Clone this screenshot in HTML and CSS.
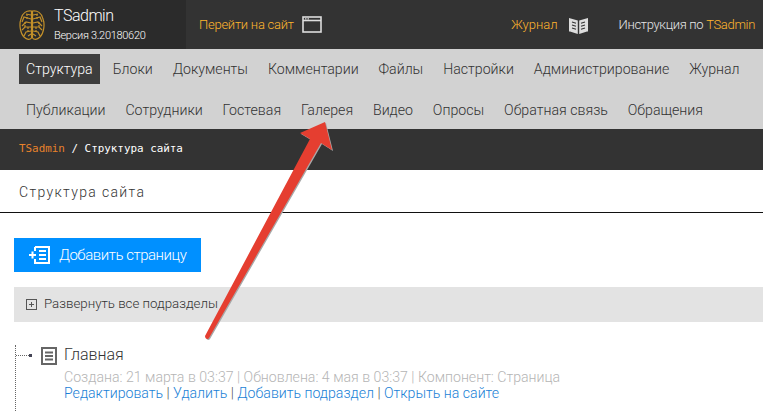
FILE: index.html
```html
<!DOCTYPE html>
<html>
<head>
    <title>TSadmin</title>
    <link rel="stylesheet" href="styles.css">
</head>
<body>
    <div class="topbar">
        <div class="logo">
            <svg class="brain" width="26" height="32" viewBox="0 0 26 32" fill="none" stroke="#c2902a" stroke-width="1.2">
                <path d="M12.5 2C8 1 3 4 2 10C0 15 1 24 5 28C8 31 11 31 12.5 29Z"/>
                <path d="M13.5 2C18 1 23 4 24 10C26 15 25 24 21 28C18 31 15 31 13.5 29Z"/>
                <path d="M12 6L7 5M12 10L5 8L3 13M12 14L7 13L3 17M12 18L6 18L3 21M12 22L7 23L5 27M9 27L12 25"/>
                <path d="M14 6L19 5M14 10L21 8L23 13M14 14L19 13L23 17M14 18L20 18L23 21M14 22L19 23L21 27M17 27L14 25"/>
                <path d="M8 5V10M18 5V10M6 13V18M20 13V18M9 18V23M17 18V23" stroke-dasharray="2 1"/>
            </svg>
            <div>
                <div class="logo-name">TSadmin</div>
                <div class="logo-version">Версия 3.20180620</div>
            </div>
        </div>
        <a class="site-link">Перейти на сайт
            <svg width="20" height="17" viewBox="0 0 20 17" fill="none" stroke="#ddd" stroke-width="1.6">
                <rect x="1" y="1" width="18" height="15"/>
                <path d="M1 4.5H19"/>
                <path d="M3 2.8H8" stroke-dasharray="1.5 1" stroke-width="1.2"/>
            </svg>
        </a>
        <div class="top-right">
            <a class="journal">Журнал
                <svg width="19" height="18" viewBox="0 0 19 18" fill="#ddd">
                    <path d="M0 2L8.8 4.5V18L1 15.5H0ZM19 2L10.2 4.5V18L18 15.5H19Z"/>
                    <path d="M3 6L7 7.2M3 9L7 10.2M3 12L7 13.2M16 6L12 7.2M16 9L12 10.2M16 12L12 13.2" stroke="#333" stroke-width="1.2"/>
                </svg>
            </a>
            <a class="manual">Инструкция по <span>TSadmin</span></a>
        </div>
    </div>

    <div class="nav">
        <div class="nav-row">
            <a class="active">Структура</a>
            <a>Блоки</a>
            <a>Документы</a>
            <a>Комментарии</a>
            <a>Файлы</a>
            <a>Настройки</a>
            <a>Администрирование</a>
            <a>Журнал</a>
        </div>
        <div class="nav-row">
            <a>Публикации</a>
            <a>Сотрудники</a>
            <a>Гостевая</a>
            <a>Галерея</a>
            <a>Видео</a>
            <a>Опросы</a>
            <a>Обратная связь</a>
            <a>Обращения</a>
        </div>
    </div>

    <div class="crumbs"><span>TSadmin</span> / Структура сайта</div>

    <h1 class="title">Структура сайта</h1>

    <div class="content">
        <a class="add-btn">
            <svg width="21" height="18" viewBox="0 0 21 18" fill="none" stroke="#fff" stroke-width="2">
                <path d="M6 1H20V17H6V13M6 5V1"/>
                <path d="M0 9H7M3.5 5.5V12.5M10 5H17M10 9H17M10 13H17"/>
            </svg>
            Добавить страницу
        </a>

        <div class="expand">
            <span class="plus"></span>
            <span class="expand-text">Развернуть все подразделы</span>
        </div>

        <div class="tree">
            <div class="tree-head">
                <span class="tree-dot"></span>
                <svg width="16" height="18" viewBox="0 0 16 18" fill="none" stroke="#666" stroke-width="2">
                    <rect x="1" y="1" width="14" height="16"/>
                    <path d="M4 5.5H12M4 9H12M4 12.5H12"/>
                </svg>
                <span class="tree-name">Главная</span>
            </div>
            <div class="tree-meta">Создана: 21 марта в 03:37 | Обновлена: 4 мая в 03:37 | Компонент: Страница</div>
            <div class="tree-links"><a>Редактировать</a> | <a>Удалить</a> | <a>Добавить подраздел</a> | <a>Открыть на сайте</a></div>
        </div>
    </div>

    <svg class="arrow" width="763" height="412" viewBox="0 0 763 412">
        <path d="M325 122L300 133L310 139L205 336C205 339 208 340 209 338L321 143L332 150Z" fill="#a8a8a8" transform="translate(1 1)"/>
        <path d="M325 122L300 133L310 139L205 336C205 339 208 340 209 338L321 143L332 150Z" fill="#e53e30"/>
    </svg>
</body>
</html>
```

FILE: styles.css
```css
html, body {
    margin: 0;
    height: 412px;
    overflow: hidden;
}

body {
    font-family: Roboto, 'Liberation Sans', sans-serif;
    font-weight: 300;
    background: white;
    color: #333;
    position: relative;
}

a {
    text-decoration: none;
}

.topbar {
    height: 49px;
    background: #333;
    display: flex;
    align-items: center;
    color: white;
}

.logo {
    width: 186px;
    height: 49px;
    background: #2b2b2b;
    display: flex;
    align-items: center;
    box-sizing: border-box;
    padding-left: 19px;
    gap: 9px;
}

.logo-name {
    font-size: 16px;
    line-height: 20px;
    margin-bottom: 3px;
    letter-spacing: -0.5px;
}

.logo-version {
    font-size: 11px;
    line-height: 14px;
    letter-spacing: -0.3px;
}

.site-link {
    margin-left: 13px;
    color: #ffb52e;
    font-size: 13px;
    letter-spacing: -0.25px;
    display: flex;
    align-items: center;
    gap: 8px;
}

.top-right {
    margin-left: auto;
    padding-right: 8px;
    display: flex;
    align-items: center;
    gap: 31px;
    font-size: 13px;
}

.journal {
    color: #ffb52e;
    display: flex;
    align-items: center;
    gap: 11px;
}

.manual {
    color: #e6e6e6;
    letter-spacing: -0.33px;
}

.manual span {
    color: #ffb52e;
}

.nav {
    height: 80px;
    background: #d2d2d2;
    box-sizing: border-box;
    padding: 5px 0 0 19px;
    font-size: 14.15px;
}

.nav-row {
    height: 30px;
    display: flex;
    align-items: center;
    gap: 6px;
}

.nav-row + .nav-row {
    margin-top: 11px;
    gap: 19.8px;
    padding-left: 7px;
    font-size: 14.2px;
}

.nav-row a {
    color: #333;
    height: 30px;
    box-sizing: border-box;
    line-height: 31px;
    padding: 0 7px;
}

.nav-row + .nav-row a {
    padding: 0;
    line-height: 30px;
}

.nav-row a.active {
    background: #3d3d3d;
    color: white;
}

.crumbs {
    height: 41px;
    background: #333;
    box-sizing: border-box;
    padding: 12px 0 0 19px;
    color: white;
    font-family: 'DejaVu Sans Mono', monospace;
    font-size: 10.9px;
    font-weight: 400;
    line-height: 15px;
}

.crumbs span {
    color: #e8822b;
}

.title {
    margin: 0;
    height: 43px;
    box-sizing: border-box;
    padding: 13px 0 0 19px;
    border-bottom: 1px solid #111;
    font-size: 14px;
    font-weight: 300;
    letter-spacing: 1.35px;
    line-height: 18px;
}

.content {
    padding: 25px 0 0 14px;
}

.add-btn {
    width: 187px;
    height: 34px;
    background: #0090ff;
    color: white;
    font-size: 15px;
    letter-spacing: -0.45px;
    display: flex;
    align-items: center;
    box-sizing: border-box;
    padding-left: 15px;
    gap: 9px;
}

.expand {
    margin-top: 15px;
    height: 35px;
    background: #e3e3e3;
    display: flex;
    align-items: center;
    padding-left: 12px;
    gap: 7px;
    font-size: 13.3px;
}

.expand-text {
    margin-top: -2px;
}

.plus {
    width: 9px;
    height: 9px;
    border: 1px solid #555;
    background:
        linear-gradient(#555, #555) center / 5px 1px no-repeat,
        linear-gradient(#555, #555) center / 1px 5px no-repeat;
}

.tree {
    margin-top: 23px;
    margin-left: 1px;
    height: 80px;
    border-left: 1px dotted #666;
    font-size: 14.15px;
}

.tree-head {
    display: flex;
    align-items: center;
    height: 21px;
    gap: 10px;
}

.tree-dot {
    width: 15px;
    height: 1px;
    border-top: 1px dotted #666;
    position: relative;
}

.tree-dot::after {
    content: '';
    position: absolute;
    right: -1px;
    top: -2px;
    width: 3px;
    height: 3px;
    background: #445;
}

.tree-name {
    font-size: 16px;
    margin-left: -3px;
    margin-top: -2px;
}

.tree-meta {
    color: #b5b5b5;
    margin: 3px 0 0 48px;
    line-height: 17px;
}

.tree-links {
    margin-left: 48px;
    margin-top: -1px;
    line-height: 17px;
    color: #555;
}

.tree-links a {
    color: #1a7fd6;
}

.arrow {
    position: absolute;
    left: 0;
    top: 0;
}
```
